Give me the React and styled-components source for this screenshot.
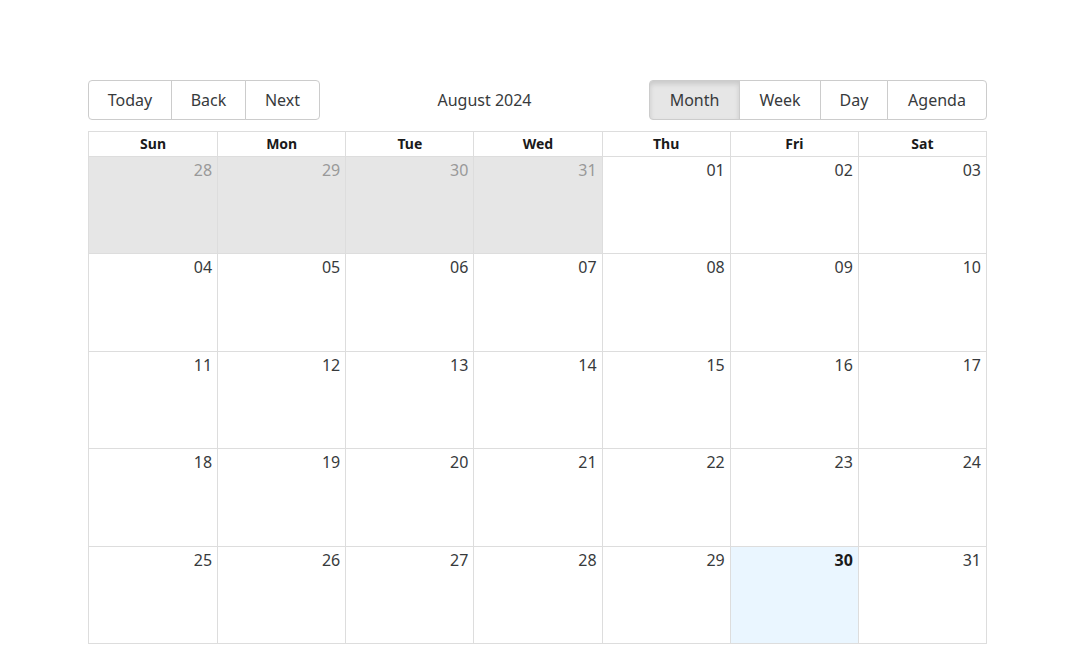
import React from "react";
import styled, { createGlobalStyle, css } from "styled-components";

const GlobalStyle = createGlobalStyle`
  body {
    margin: 0;
    background: #fff;
    font-family: "Noto Sans", "Open Sans", "Liberation Sans", sans-serif;
    color: #373a3c;
  }
`;

const Page = styled.div`
  padding: 80px 0 0 88px;
`;

const Calendar = styled.div`
  width: 899px;
  display: flex;
  flex-direction: column;
`;

const Toolbar = styled.div`
  display: flex;
  align-items: center;
  margin-bottom: 11px;
  height: 40px;
`;

const ButtonGroup = styled.div`
  display: flex;
`;

const Button = styled.button`
  font-family: inherit;
  font-size: 16px;
  color: #373a3c;
  background: ${(p) => (p.$active ? "#e6e6e6" : "#fff")};
  box-shadow: ${(p) => (p.$active ? "inset 0 3px 5px rgba(0,0,0,.125)" : "none")};
  border: 1px solid #ccc;
  height: 40px;
  width: ${(p) => p.$w}px;
  padding: 0;
  margin-left: -1px;
  cursor: pointer;
  &:first-child {
    margin-left: 0;
    border-radius: 4px 0 0 4px;
  }
  &:last-child {
    border-radius: 0 4px 4px 0;
  }
`;

const Label = styled.span`
  flex: 1;
  text-align: center;
  font-size: 16px;
  padding: 0 10px;
`;

const Month = styled.div`
  border: 1px solid #ddd;
  height: 511px;
  display: flex;
  flex-direction: column;
`;

const HeaderRow = styled.div`
  display: grid;
  grid-template-columns: repeat(7, minmax(0, 1fr));
  border-bottom: 1px solid #ddd;
  height: 24px;
`;

const HeaderCell = styled.div`
  font-weight: bold;
  font-size: 14px;
  color: #1a1a1a;
  text-align: center;
  line-height: 24px;
  & + & {
    border-left: 1px solid #ddd;
  }
`;

const Week = styled.div`
  flex: 1;
  display: grid;
  grid-template-columns: repeat(7, minmax(0, 1fr));
  & + & {
    border-top: 1px solid #ddd;
  }
`;

const Day = styled.div`
  text-align: right;
  padding: 2px 5px 0 0;
  font-size: 16px;
  line-height: 22px;
  color: #373a3c;
  & + & {
    border-left: 1px solid #ddd;
  }
  ${(p) =>
    p.$off &&
    css`
      background: #e6e6e6;
      color: #999;
    `}
  ${(p) =>
    p.$today &&
    css`
      background: #eaf6ff;
      font-weight: bold;
      color: #1a1a1a;
    `}
`;

const days = ["Sun", "Mon", "Tue", "Wed", "Thu", "Fri", "Sat"];

const pad = (n) => String(n).padStart(2, "0");

const buildWeeks = () => {
  const cells = [28, 29, 30, 31].map((d) => ({ d, off: true }));
  for (let i = 1; i <= 31; i++) cells.push({ d: i, today: i === 30 });
  const weeks = [];
  for (let i = 0; i < cells.length; i += 7) weeks.push(cells.slice(i, i + 7));
  return weeks;
};

export default function App() {
  const weeks = buildWeeks();
  return (
    <Page>
      <GlobalStyle />
      <Calendar>
        <Toolbar>
          <ButtonGroup>
            <Button $w={84}>Today</Button>
            <Button $w={75}>Back</Button>
            <Button $w={75}>Next</Button>
          </ButtonGroup>
          <Label>August 2024</Label>
          <ButtonGroup>
            <Button $w={91} $active>Month</Button>
            <Button $w={82}>Week</Button>
            <Button $w={68}>Day</Button>
            <Button $w={100}>Agenda</Button>
          </ButtonGroup>
        </Toolbar>
        <Month>
          <HeaderRow>
            {days.map((d) => (
              <HeaderCell key={d}>{d}</HeaderCell>
            ))}
          </HeaderRow>
          {weeks.map((w, i) => (
            <Week key={i}>
              {w.map((c, j) => (
                <Day key={j} $off={c.off} $today={c.today}>
                  {pad(c.d)}
                </Day>
              ))}
            </Week>
          ))}
        </Month>
      </Calendar>
    </Page>
  );
}
